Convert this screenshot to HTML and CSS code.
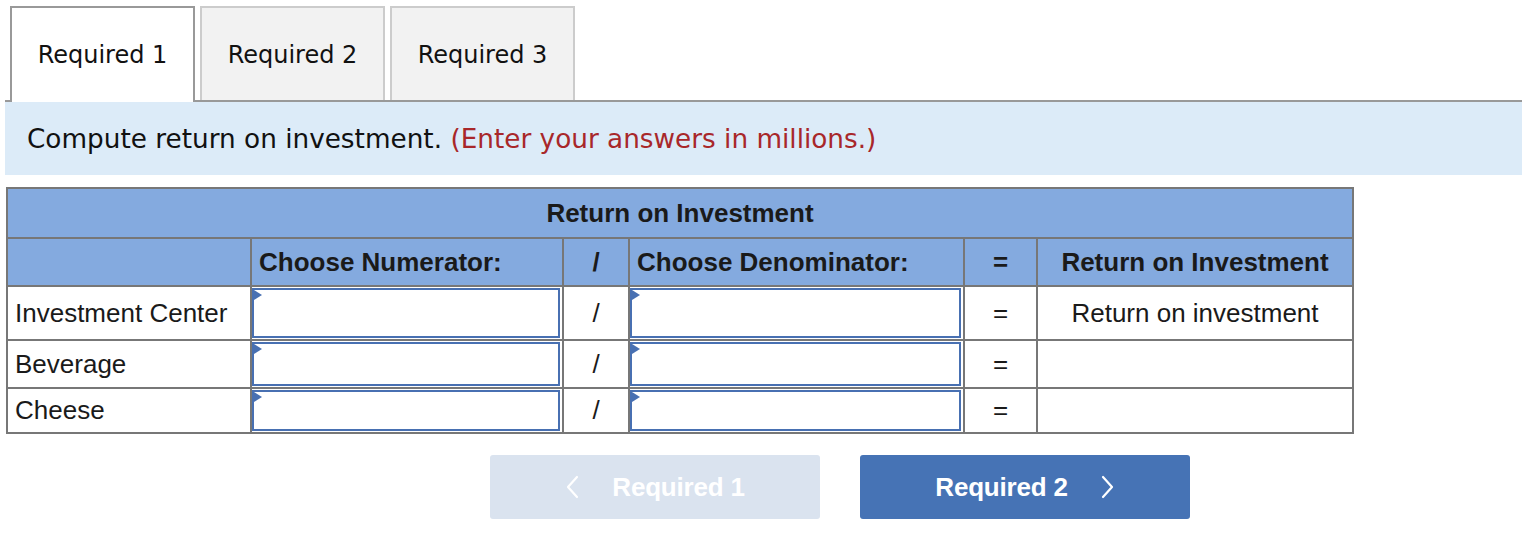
FILE: index.html
```html
<!DOCTYPE html>
<html lang="en">
<head>
<meta charset="utf-8">
<title>Return on Investment</title>
<link rel="stylesheet" href="styles.css">
</head>
<body>
<div class="page">
  <div class="tabs">
    <div class="tab active">Required 1</div>
    <div class="tab">Required 2</div>
    <div class="tab">Required 3</div>
  </div>
  <div class="prompt">Compute return on investment.&nbsp;<span class="note">(Enter your answers in millions.)</span></div>

  <table class="roi">
    <colgroup>
      <col class="c-label">
      <col class="c-num">
      <col class="c-op">
      <col class="c-den">
      <col class="c-eq">
      <col class="c-res">
    </colgroup>
    <thead>
      <tr class="h1"><th colspan="6">Return on Investment</th></tr>
      <tr class="h2">
        <th></th>
        <th class="left">Choose Numerator:</th>
        <th>/</th>
        <th class="left">Choose Denominator:</th>
        <th>=</th>
        <th>Return on Investment</th>
      </tr>
    </thead>
    <tbody>
      <tr class="r1">
        <td class="label">Investment Center</td>
        <td class="in"><div class="inp"></div></td>
        <td class="op">/</td>
        <td class="in"><div class="inp"></div></td>
        <td class="op">=</td>
        <td class="res">Return on investment</td>
      </tr>
      <tr class="r2">
        <td class="label">Beverage</td>
        <td class="in"><div class="inp"></div></td>
        <td class="op">/</td>
        <td class="in"><div class="inp"></div></td>
        <td class="op">=</td>
        <td class="res"></td>
      </tr>
      <tr class="r3">
        <td class="label">Cheese</td>
        <td class="in"><div class="inp"></div></td>
        <td class="op">/</td>
        <td class="in"><div class="inp"></div></td>
        <td class="op">=</td>
        <td class="res"></td>
      </tr>
    </tbody>
  </table>

  <div class="nav">
    <div class="btn prev">
      <svg class="chev" width="14" height="24" viewBox="0 0 14 24"><polyline points="12,2 3,12 12,22" fill="none" stroke="#fff" stroke-width="2.2" stroke-linecap="round" stroke-linejoin="round"/></svg>
      <span>Required 1</span>
    </div>
    <div class="btn next">
      <span>Required 2</span>
      <svg class="chev" width="14" height="24" viewBox="0 0 14 24"><polyline points="2,2 11,12 2,22" fill="none" stroke="#fff" stroke-width="2.2" stroke-linecap="round" stroke-linejoin="round"/></svg>
    </div>
  </div>
</div>
</body>
</html>
```

FILE: styles.css
```css
html, body {
  margin: 0;
  padding: 0;
  background: #fff;
}

.page {
  padding: 6px 0 0 5px;
}

/* Tabs */
.tabs {
  display: flex;
  gap: 5px;
  padding-left: 5px;
  height: 94px;
  border-bottom: 2px solid #999;
}

.tab {
  box-sizing: border-box;
  width: 185px;
  height: 94px;
  display: flex;
  align-items: center;
  justify-content: center;
  padding-top: 2px;
  font-family: "DejaVu Sans", Verdana, sans-serif;
  font-size: 24px;
  color: #111;
  background: #f2f2f2;
  border: 2px solid #ccc;
  border-bottom: none;
}

.tab.active {
  height: 96px;
  margin-bottom: -2px;
  padding-bottom: 2px;
  background: #fff;
  border-color: #999;
  position: relative;
}

/* Prompt */
.prompt {
  height: 73px;
  display: flex;
  align-items: center;
  padding-left: 22px;
  background: #dcebf8;
  font-family: "DejaVu Sans", Verdana, sans-serif;
  font-size: 26.3px;
  color: #111;
  white-space: pre;
}

.note {
  color: #a8272a;
}

/* Table */
.roi {
  margin: 12px 0 0 1px;
  border-collapse: collapse;
  table-layout: fixed;
  width: 1348px;
  border: 2px solid #777;
  font-family: "Liberation Sans", Arial, Helvetica, sans-serif;
  font-size: 26px;
  color: #1a1a1a;
}

.c-label { width: 244px; }
.c-num { width: 312px; }
.c-op { width: 66px; }
.c-den { width: 335px; }
.c-eq { width: 73px; }
.c-res { width: 316px; }

.roi th,
.roi td {
  border: 2px solid #777;
  padding: 0;
  vertical-align: middle;
}

.roi th {
  background: #84aadf;
  font-weight: bold;
  text-align: center;
  white-space: nowrap;
}

.roi .h1 th {
  line-height: 48px;
}

.roi .h2 th {
  line-height: 46px;
}

.roi th.left {
  text-align: left;
  padding-left: 7px;
}

.roi td.label {
  padding-left: 7px;
  white-space: nowrap;
}

.roi td.op,
.roi td.res {
  text-align: center;
}

.roi td.in {
  padding: 1px 2px 1px 0;
}

.inp {
  box-sizing: border-box;
  position: relative;
  width: 100%;
  background: #fff;
  border: 2px solid #4870b2;
}

.inp::before {
  content: "";
  position: absolute;
  left: 0;
  top: 0;
  width: 0;
  height: 0;
  border-left: 8px solid #4870b2;
  border-top: 5px solid transparent;
  border-bottom: 5px solid transparent;
}

.r1 .inp { height: 50px; }
.r2 .inp { height: 44px; }
.r3 .inp { height: 41px; }

/* Navigation buttons */
.nav {
  display: flex;
  gap: 40px;
  padding: 21px 0 0 485px;
}

.btn {
  box-sizing: border-box;
  width: 330px;
  height: 64px;
  border-radius: 3px;
  display: flex;
  align-items: center;
  justify-content: center;
  gap: 33px;
  font-family: "Liberation Sans", Arial, Helvetica, sans-serif;
  font-weight: bold;
  font-size: 26px;
  letter-spacing: -0.2px;
  color: #fff;
}

.btn.prev {
  background: #dae3ef;
}

.btn.next {
  background: #4673b5;
}

.chev {
  display: block;
}
```
